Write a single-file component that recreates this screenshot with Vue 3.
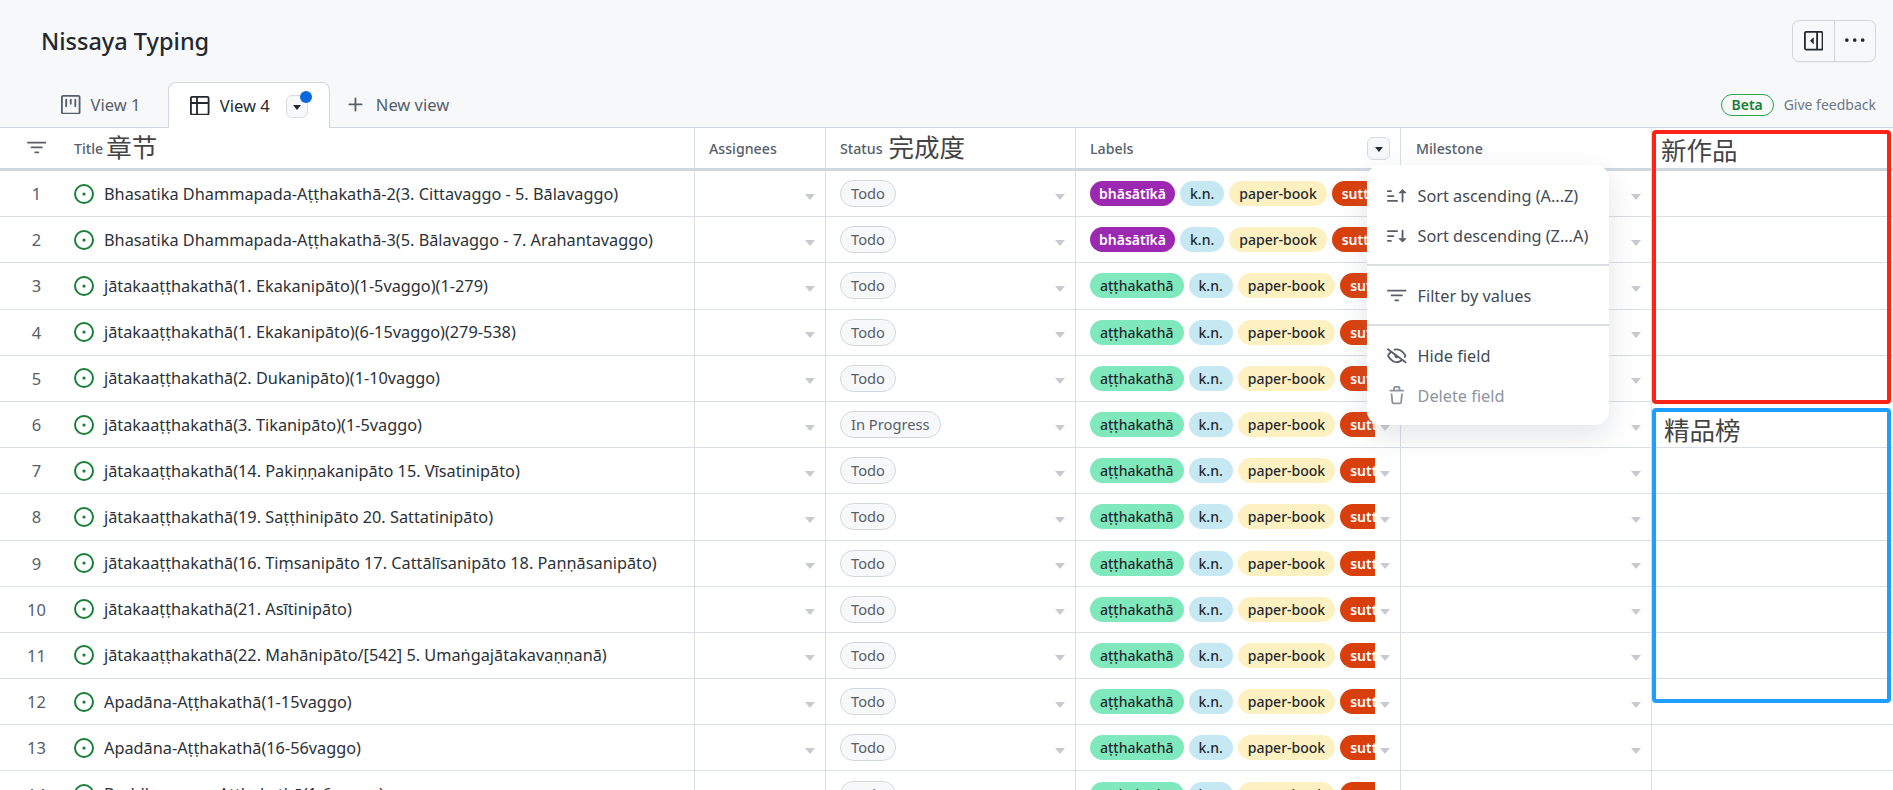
<template>
  <div class="page">
    <div class="top">
      <h1 class="project-title">Nissaya Typing</h1>
      <div class="top-actions">
        <button class="top-btn">
          <svg class="icon dark" viewBox="0 0 16 16"><path :d="icons.sidebar" /></svg>
        </button>
        <button class="top-btn">
          <svg class="icon dark" viewBox="0 0 16 16"><path :d="icons.kebab" /></svg>
        </button>
      </div>
    </div>

    <div class="tabs">
      <div class="tab">
        <svg class="icon" viewBox="0 0 16 16"><path :d="icons.board" /></svg>
        <span>View 1</span>
      </div>
      <div class="tab active">
        <svg class="icon dark" viewBox="0 0 16 16"><path :d="icons.table" /></svg>
        <span>View 4</span>
        <span class="tab-menu"><i class="caret dark-caret"></i><i class="dot"></i></span>
      </div>
      <div class="tab new-view">
        <svg class="icon" viewBox="0 0 16 16"><path :d="icons.plus" /></svg>
        <span>New view</span>
      </div>
      <div class="feedback">
        <span class="beta">Beta</span>
        <span class="give">Give feedback</span>
      </div>
    </div>

    <div class="table">
      <div class="row head">
        <div class="cell title-cell">
          <span class="num-col">
            <svg class="icon" viewBox="0 0 16 16"><path :d="icons.filter" /></svg>
          </span>
          <span class="head-label title-label">Title</span>
          <span class="note">章节</span>
        </div>
        <div class="cell"><span class="head-label">Assignees</span></div>
        <div class="cell"><span class="head-label">Status</span><span class="note status-note">完成度</span></div>
        <div class="cell labels-head">
          <span class="head-label">Labels</span>
          <span class="field-btn"><i class="caret dark-caret"></i></span>
        </div>
        <div class="cell milestone-head"><span class="head-label">Milestone</span></div>
        <div class="cell last"></div>
      </div>

      <div v-for="(item, i) in items" :key="i" class="row">
        <div class="cell title-cell">
          <span class="num-col num">{{ i + 1 }}</span>
          <svg class="issue" viewBox="0 0 16 16">
            <circle cx="8" cy="8" r="7.2" />
            <circle class="issue-dot" cx="8" cy="8" r="1.3" />
          </svg>
          <span class="issue-title">{{ item.title }}</span>
        </div>
        <div class="cell drop"><i class="caret"></i></div>
        <div class="cell drop">
          <span class="status">{{ item.status || 'Todo' }}</span>
          <i class="caret"></i>
        </div>
        <div class="cell drop">
          <div class="label-wrap">
            <span class="label" :class="item.kind === 'b' ? 'bhasa' : 'attha'">
              {{ item.kind === 'b' ? 'bhāsātīkā' : 'aṭṭhakathā' }}
            </span>
            <span class="label kn">k.n.</span>
            <span class="label paper">paper-book</span>
            <span class="label sutta">suttanta</span>
          </div>
          <i class="caret"></i>
        </div>
        <div class="cell drop"><i class="caret"></i></div>
        <div class="cell last"></div>
      </div>
    </div>

    <div class="field-menu">
      <div class="menu-item">
        <svg class="icon" viewBox="0 0 16 16"><path :d="icons.sortAsc" /></svg>
        <span>Sort ascending (A...Z)</span>
      </div>
      <div class="menu-item">
        <svg class="icon" viewBox="0 0 16 16"><path :d="icons.sortDesc" /></svg>
        <span>Sort descending (Z...A)</span>
      </div>
      <div class="menu-line"></div>
      <div class="menu-item">
        <svg class="icon" viewBox="0 0 16 16"><path :d="icons.filter" /></svg>
        <span>Filter by values</span>
      </div>
      <div class="menu-line"></div>
      <div class="menu-item">
        <svg class="icon" viewBox="0 0 16 16"><path :d="icons.eyeClosed" /></svg>
        <span>Hide field</span>
      </div>
      <div class="menu-item disabled">
        <svg class="icon" viewBox="0 0 16 16"><path :d="icons.trash" /></svg>
        <span>Delete field</span>
      </div>
    </div>

    <div class="mark red"><span class="note">新作品</span></div>
    <div class="mark blue"><span class="note">精品榜</span></div>
  </div>
</template>

<script setup>
const items = [
  { kind: 'b', title: 'Bhasatika Dhammapada-Aṭṭhakathā-2(3. Cittavaggo - 5. Bālavaggo)' },
  { kind: 'b', title: 'Bhasatika Dhammapada-Aṭṭhakathā-3(5. Bālavaggo - 7. Arahantavaggo)' },
  { title: 'jātakaaṭṭhakathā(1. Ekakanipāto)(1-5vaggo)(1-279)' },
  { title: 'jātakaaṭṭhakathā(1. Ekakanipāto)(6-15vaggo)(279-538)' },
  { title: 'jātakaaṭṭhakathā(2. Dukanipāto)(1-10vaggo)' },
  { title: 'jātakaaṭṭhakathā(3. Tikanipāto)(1-5vaggo)', status: 'In Progress' },
  { title: 'jātakaaṭṭhakathā(14. Pakiṇṇakanipāto 15. Vīsatinipāto)' },
  { title: 'jātakaaṭṭhakathā(19. Saṭṭhinipāto 20. Sattatinipāto)' },
  { title: 'jātakaaṭṭhakathā(16. Tiṃsanipāto 17. Cattālīsanipāto 18. Paṇṇāsanipāto)' },
  { title: 'jātakaaṭṭhakathā(21. Asītinipāto)' },
  { title: 'jātakaaṭṭhakathā(22. Mahānipāto/[542] 5. Umaṅgajātakavaṇṇanā)' },
  { title: 'Apadāna-Aṭṭhakathā(1-15vaggo)' },
  { title: 'Apadāna-Aṭṭhakathā(16-56vaggo)' },
  { title: 'Buddhavaṃsa-Aṭṭhakathā(1-6vaggo)' }
]

const icons = {
  board: 'M1.75 0h12.5C15.216 0 16 .784 16 1.75v12.5A1.75 1.75 0 0 1 14.25 16H1.75A1.75 1.75 0 0 1 0 14.25V1.75C0 .784.784 0 1.75 0ZM1.5 1.75v12.5c0 .138.112.25.25.25h12.5a.25.25 0 0 0 .25-.25V1.75a.25.25 0 0 0-.25-.25H1.75a.25.25 0 0 0-.25.25ZM11.75 3a.75.75 0 0 1 .75.75v5.5a.75.75 0 0 1-1.5 0v-5.5a.75.75 0 0 1 .75-.75Zm-8.25.75a.75.75 0 0 1 1.5 0v5.5a.75.75 0 0 1-1.5 0ZM8 3a.75.75 0 0 1 .75.75v3.5a.75.75 0 0 1-1.5 0v-3.5A.75.75 0 0 1 8 3Z',
  table: 'M0 1.75C0 .784.784 0 1.75 0h12.5C15.216 0 16 .784 16 1.75v12.5A1.75 1.75 0 0 1 14.25 16H1.75A1.75 1.75 0 0 1 0 14.25ZM6.5 6.5v8h7.75a.25.25 0 0 0 .25-.25V6.5Zm8-1.5V1.75a.25.25 0 0 0-.25-.25H6.5V5Zm-13 1.5v7.75c0 .138.112.25.25.25H5v-8ZM5 5V1.5H1.75a.25.25 0 0 0-.25.25V5Z',
  plus: 'M7.75 2a.75.75 0 0 1 .75.75V7h4.25a.75.75 0 0 1 0 1.5H8.5v4.25a.75.75 0 0 1-1.5 0V8.5H2.75a.75.75 0 0 1 0-1.5H7V2.75A.75.75 0 0 1 7.75 2Z',
  filter: 'M.75 3h14.5a.75.75 0 0 1 0 1.5H.75a.75.75 0 0 1 0-1.5ZM3 7.75A.75.75 0 0 1 3.75 7h8.5a.75.75 0 0 1 0 1.5h-8.5A.75.75 0 0 1 3 7.75Zm3 4a.75.75 0 0 1 .75-.75h2.5a.75.75 0 0 1 0 1.5h-2.5a.75.75 0 0 1-.75-.75Z',
  sortAsc: 'm12.927 2.573 3 3A.25.25 0 0 1 15.75 6H13.5v6.75a.75.75 0 0 1-1.5 0V6H9.75a.25.25 0 0 1-.177-.427l3-3a.25.25 0 0 1 .354 0ZM0 12.25a.75.75 0 0 1 .75-.75h7.5a.75.75 0 0 1 0 1.5H.75a.75.75 0 0 1-.75-.75Zm0-4a.75.75 0 0 1 .75-.75h4.5a.75.75 0 0 1 0 1.5H.75A.75.75 0 0 1 0 8.25Zm0-4a.75.75 0 0 1 .75-.75h2.5a.75.75 0 0 1 0 1.5H.75A.75.75 0 0 1 0 4.25Z',
  sortDesc: 'M0 4.25a.75.75 0 0 1 .75-.75h7.5a.75.75 0 0 1 0 1.5H.75A.75.75 0 0 1 0 4.25Zm0 4a.75.75 0 0 1 .75-.75h4.5a.75.75 0 0 1 0 1.5H.75A.75.75 0 0 1 0 8.25Zm0 4a.75.75 0 0 1 .75-.75h2.5a.75.75 0 0 1 0 1.5H.75a.75.75 0 0 1-.75-.75ZM13.5 10h2.25a.25.25 0 0 1 .177.427l-3 3a.25.25 0 0 1-.354 0l-3-3A.25.25 0 0 1 9.75 10H12V3.75a.75.75 0 0 1 1.5 0V10Z',
  eyeClosed: 'M.143 2.31a.75.75 0 0 1 1.047-.167l14.5 10.5a.75.75 0 1 1-.88 1.214l-2.248-1.628C11.346 13.19 9.792 14 8 14c-1.981 0-3.67-.992-4.933-2.078C1.797 10.832.88 9.577.43 8.9a1.619 1.619 0 0 1 0-1.797c.353-.533.995-1.42 1.868-2.305L.31 3.357A.75.75 0 0 1 .143 2.31Zm1.536 5.622A.12.12 0 0 0 1.657 8c0 .021.006.045.022.068.412.621 1.242 1.75 2.366 2.717C5.175 11.758 6.527 12.5 8 12.5c1.195 0 2.31-.488 3.29-1.191L9.063 9.695A2 2 0 0 1 6.058 7.52L3.529 5.688a14.207 14.207 0 0 0-1.85 2.244ZM8 3.5c-.516 0-1.017.09-1.499.251a.75.75 0 1 1-.473-1.423A6.207 6.207 0 0 1 8 2c1.981 0 3.67.992 4.933 2.078 1.27 1.091 2.187 2.345 2.637 3.023a1.62 1.62 0 0 1 0 1.798c-.11.166-.248.365-.41.587a.75.75 0 1 1-1.21-.887c.148-.201.272-.382.371-.53a.119.119 0 0 0 0-.137c-.412-.621-1.242-1.75-2.366-2.717C10.825 4.242 9.473 3.5 8 3.5Z',
  trash: 'M11 1.75V3h2.25a.75.75 0 0 1 0 1.5H2.75a.75.75 0 0 1 0-1.5H5V1.75C5 .784 5.784 0 6.75 0h2.5C10.216 0 11 .784 11 1.75ZM4.496 6.675l.66 6.6a.25.25 0 0 0 .249.225h5.19a.25.25 0 0 0 .249-.225l.66-6.6a.75.75 0 0 1 1.492.149l-.66 6.6A1.748 1.748 0 0 1 10.595 15h-5.19a1.75 1.75 0 0 1-1.741-1.575l-.66-6.6a.75.75 0 1 1 1.492-.15ZM6.5 1.75V3h3V1.75a.25.25 0 0 0-.25-.25h-2.5a.25.25 0 0 0-.25.25Z',
  sidebar: 'M1.75 0h12.5C15.216 0 16 .784 16 1.75v12.5A1.75 1.75 0 0 1 14.25 16H1.75A1.75 1.75 0 0 1 0 14.25V1.75C0 .784.784 0 1.75 0ZM1.5 1.75v12.5c0 .138.112.25.25.25H10V1.5H1.75a.25.25 0 0 0-.25.25ZM11.5 14.5h2.75a.25.25 0 0 0 .25-.25V1.75a.25.25 0 0 0-.25-.25H11.5ZM5.177 7.823a.25.25 0 0 0 0 .354l2.396 2.396A.25.25 0 0 0 8 10.396V5.604a.25.25 0 0 0-.427-.177Z',
  kebab: 'M8 9a1.5 1.5 0 1 0 0-3 1.5 1.5 0 0 0 0 3ZM1.5 9a1.5 1.5 0 1 0 0-3 1.5 1.5 0 0 0 0 3Zm13 0a1.5 1.5 0 1 0 0-3 1.5 1.5 0 0 0 0 3Z'
}
</script>

<style>
html,
body {
  margin: 0;
  background: #f6f8fa;
}
</style>

<style scoped>
.page {
  position: relative;
  height: 790px;
  overflow: hidden;
  background: #f6f8fa;
  color: #24292f;
  font-family: "Noto Sans", "Noto Sans CJK SC", sans-serif;
}

.top {
  display: flex;
  align-items: center;
  justify-content: space-between;
  height: 82px;
  padding: 0 17px 0 41px;
  box-sizing: border-box;
}

.project-title {
  margin: 2px 0 0;
  font-size: 23.5px;
  font-weight: 500;
  line-height: 1;
  color: #24292f;
}

.top-actions {
  display: flex;
  height: 42px;
  box-sizing: border-box;
  border: 1px solid #d3d7dc;
  border-radius: 7px;
  box-shadow: 0 1px 0 rgba(27, 31, 36, 0.04);
}

.top-btn {
  display: flex;
  align-items: center;
  justify-content: center;
  width: 41px;
  padding: 0;
  border: none;
  background: none;
}

.top-btn + .top-btn {
  border-left: 1px solid #d3d7dc;
}

.icon {
  width: 19.5px;
  height: 19.5px;
  flex: none;
  fill: #57606a;
}

.icon.dark {
  fill: #24292f;
}

.tabs {
  display: flex;
  align-items: stretch;
  height: 45px;
  padding-left: 41px;
}

.tab {
  display: flex;
  align-items: center;
  gap: 10px;
  padding: 0 20px;
  margin-right: 8px;
  font-size: 16.5px;
  color: #57606a;
}

.tab.active {
  position: relative;
  width: 162px;
  box-sizing: border-box;
  height: 46px;
  padding: 0 0 0 21px;
  margin-right: 0;
  background: #fff;
  border: 1px solid #d0d7de;
  border-bottom: none;
  border-radius: 8px 8px 0 0;
  color: #24292f;
  z-index: 1;
}

.tab-menu {
  position: relative;
  display: flex;
  align-items: center;
  justify-content: center;
  width: 22px;
  height: 23px;
  margin-left: 6px;
  margin-top: 1px;
  background: #f6f8fa;
  border: 1px solid #d8dce1;
  border-radius: 6px;
  box-sizing: border-box;
}

.dot {
  position: absolute;
  top: -5px;
  right: -5px;
  width: 12px;
  height: 12px;
  border-radius: 50%;
  background: #0969da;
}

.new-view {
  padding-left: 16px;
  gap: 10px;
}

.feedback {
  display: flex;
  align-items: center;
  gap: 10px;
  margin-left: auto;
  padding: 0 17px 0 0;
}

.beta {
  width: 53px;
  height: 22px;
  line-height: 20px;
  box-sizing: border-box;
  text-align: center;
  border: 1px solid #2da44e;
  border-radius: 11px;
  font-size: 14px;
  font-weight: 600;
  color: #1a7f37;
}

.give {
  font-size: 14px;
  color: #6e7781;
}

.table {
  background: #fff;
  border-top: 1px solid #d0d7de;
}

.row {
  display: grid;
  grid-template-columns: 695px 131px 250px 325px 251px 241px;
  height: 46.2px;
  box-sizing: border-box;
  border-bottom: 1px solid #d8dee4;
}

.row.head {
  height: 43px;
  border-bottom: 3px solid #d0d7de;
}

.cell {
  position: relative;
  display: flex;
  align-items: center;
  min-width: 0;
  padding-left: 14px;
  box-sizing: border-box;
  border-right: 1px solid #d8dee4;
}

.cell.last {
  border-right: none;
}

.cell.title-cell {
  padding-left: 0;
}

.cell.milestone-head {
  padding-left: 15px;
}

.num-col {
  display: flex;
  justify-content: center;
  width: 73px;
  flex: none;
}

.num {
  font-size: 16.5px;
  color: #57606a;
}

.head-label {
  font-size: 14.2px;
  font-weight: 500;
  color: #57606a;
}

.title-label {
  margin-left: 1px;
}

.note {
  margin-left: 3px;
  font-size: 25.5px;
  line-height: 1;
  color: #444;
}

.status-note {
  margin-left: 6px;
}

.mark .note {
  margin-left: 0;
}

.labels-head {
  justify-content: space-between;
  padding-right: 10px;
}

.field-btn {
  display: flex;
  align-items: center;
  justify-content: center;
  width: 23px;
  height: 23px;
  box-sizing: border-box;
  background: #f6f8fa;
  border: 1px solid #d8dce1;
  border-radius: 6px;
}

.issue {
  width: 20px;
  height: 20px;
  flex: none;
  margin-left: 1px;
  fill: none;
  stroke: #1a7f37;
  stroke-width: 1.6;
}

.issue .issue-dot {
  fill: #1a7f37;
  stroke: none;
}

.issue-title {
  margin-left: 10px;
  font-size: 16.3px;
  color: #2b3138;
  white-space: nowrap;
}

.caret {
  position: absolute;
  right: 10px;
  top: 50%;
  width: 0;
  height: 0;
  border-left: 5px solid transparent;
  border-right: 5px solid transparent;
  border-top: 6px solid #c6cbd1;
}

.caret.dark-caret {
  position: static;
  border-left-width: 4.5px;
  border-right-width: 4.5px;
  border-top: 5px solid #24292f;
  margin-top: 2px;
}

.status {
  padding: 0 10px;
  height: 27px;
  line-height: 25px;
  box-sizing: border-box;
  background: #f6f8fa;
  border: 1px solid #d0d7de;
  border-radius: 14px;
  font-size: 14.7px;
  color: #57606a;
}

.label-wrap {
  display: flex;
  gap: 5px;
  width: 285px;
  overflow: hidden;
}

.label {
  flex: none;
  height: 25px;
  line-height: 25px;
  padding: 0 10px;
  border-radius: 13px;
  font-size: 14px;
  font-weight: 500;
  color: #24292f;
  white-space: nowrap;
}

.bhasa {
  padding: 0 9px;
  background: #9c27b0;
  color: #fff;
  font-weight: 600;
}

.attha {
  background: #7fe8bc;
}

.kn {
  background: #c5e8f3;
}

.paper {
  background: #fdf1c2;
}

.sutta {
  background: #d93f0b;
  color: #fff;
  font-weight: 600;
}

.field-menu {
  position: absolute;
  left: 1367px;
  top: 165px;
  width: 242px;
  height: 260px;
  padding-top: 11px;
  box-sizing: border-box;
  background: #fff;
  border-radius: 14px;
  box-shadow: 0 10px 28px rgba(140, 149, 159, 0.25);
  z-index: 2;
}

.menu-item {
  display: flex;
  align-items: center;
  gap: 11px;
  height: 40px;
  padding-left: 20px;
  font-size: 16.3px;
  color: #424a53;
}

.menu-item.disabled {
  color: #8c959f;
}

.menu-item.disabled .icon {
  fill: #8c959f;
}

.menu-line {
  height: 2px;
  margin: 8px 0 10px;
  background: #d8dee4;
}

.mark {
  position: absolute;
  left: 1652px;
  width: 239px;
  box-sizing: border-box;
  border: 4px solid;
  border-radius: 4px;
  z-index: 3;
}

.mark.red {
  top: 130px;
  height: 274px;
  border-color: #ff2317;
  padding: 4px 0 0 5px;
}

.mark.blue {
  top: 408px;
  height: 295px;
  border-color: #1e9fff;
  padding: 6px 0 0 8px;
}
</style>
